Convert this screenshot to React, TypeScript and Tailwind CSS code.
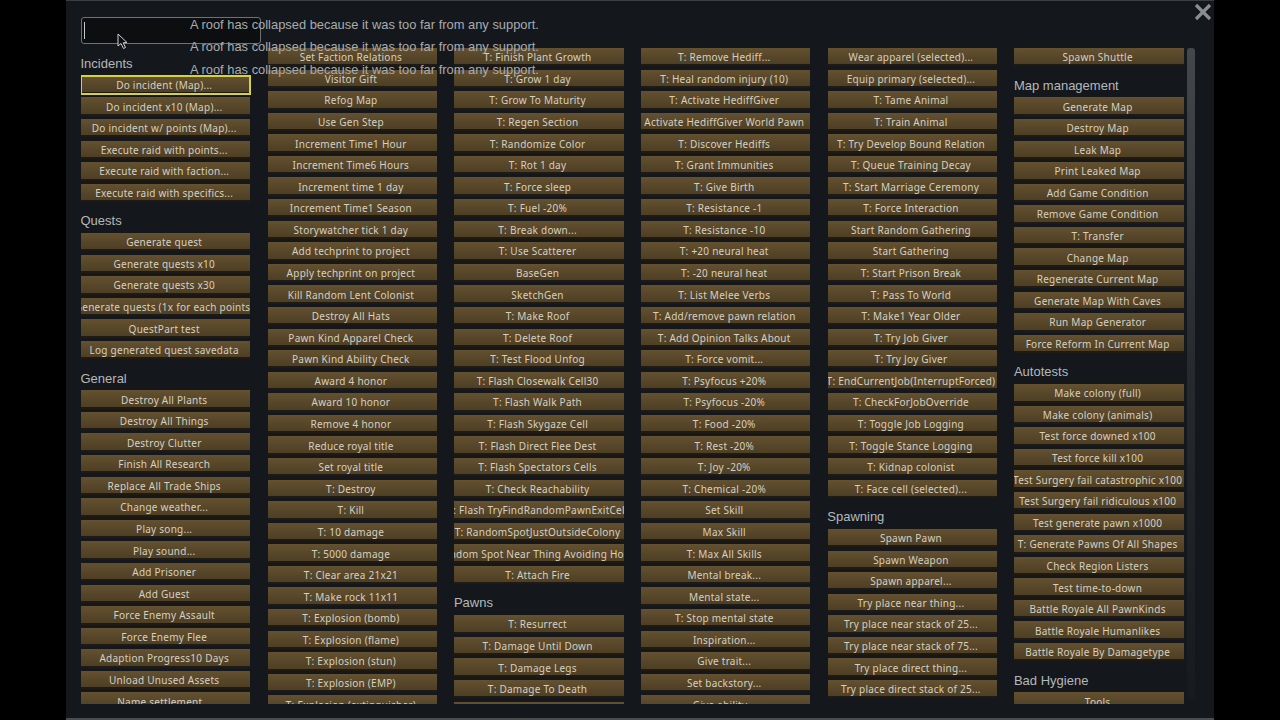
type Section = { title?: string; items: string[] };

const COLUMNS: Section[][] = [
  [
    {
      title: 'Incidents',
      items: [
        'Do incident (Map)...',
        'Do incident x10 (Map)...',
        'Do incident w/ points (Map)...',
        'Execute raid with points...',
        'Execute raid with faction...',
        'Execute raid with specifics...',
      ],
    },
    {
      title: 'Quests',
      items: [
        'Generate quest',
        'Generate quests x10',
        'Generate quests x30',
        'Generate quests (1x for each points)',
        'QuestPart test',
        'Log generated quest savedata',
      ],
    },
    {
      title: 'General',
      items: [
        'Destroy All Plants',
        'Destroy All Things',
        'Destroy Clutter',
        'Finish All Research',
        'Replace All Trade Ships',
        'Change weather...',
        'Play song...',
        'Play sound...',
        'Add Prisoner',
        'Add Guest',
        'Force Enemy Assault',
        'Force Enemy Flee',
        'Adaption Progress10 Days',
        'Unload Unused Assets',
        'Name settlement...',
      ],
    },
  ],
  [
    {
      items: [
        'Set Faction Relations',
        'Visitor Gift',
        'Refog Map',
        'Use Gen Step',
        'Increment Time1 Hour',
        'Increment Time6 Hours',
        'Increment time 1 day',
        'Increment Time1 Season',
        'Storywatcher tick 1 day',
        'Add techprint to project',
        'Apply techprint on project',
        'Kill Random Lent Colonist',
        'Destroy All Hats',
        'Pawn Kind Apparel Check',
        'Pawn Kind Ability Check',
        'Award 4 honor',
        'Award 10 honor',
        'Remove 4 honor',
        'Reduce royal title',
        'Set royal title',
        'T: Destroy',
        'T: Kill',
        'T: 10 damage',
        'T: 5000 damage',
        'T: Clear area 21x21',
        'T: Make rock 11x11',
        'T: Explosion (bomb)',
        'T: Explosion (flame)',
        'T: Explosion (stun)',
        'T: Explosion (EMP)',
        'T: Explosion (extinguisher)',
      ],
    },
  ],
  [
    {
      items: [
        'T: Finish Plant Growth',
        'T: Grow 1 day',
        'T: Grow To Maturity',
        'T: Regen Section',
        'T: Randomize Color',
        'T: Rot 1 day',
        'T: Force sleep',
        'T: Fuel -20%',
        'T: Break down...',
        'T: Use Scatterer',
        'BaseGen',
        'SketchGen',
        'T: Make Roof',
        'T: Delete Roof',
        'T: Test Flood Unfog',
        'T: Flash Closewalk Cell30',
        'T: Flash Walk Path',
        'T: Flash Skygaze Cell',
        'T: Flash Direct Flee Dest',
        'T: Flash Spectators Cells',
        'T: Check Reachability',
        'T: Flash TryFindRandomPawnExitCell',
        'T: RandomSpotJustOutsideColony',
        'T: Random Spot Near Thing Avoiding Hostiles',
        'T: Attach Fire',
      ],
    },
    {
      title: 'Pawns',
      items: ['T: Resurrect', 'T: Damage Until Down', 'T: Damage Legs', 'T: Damage To Death', 'T: Surgery'],
    },
  ],
  [
    {
      items: [
        'T: Remove Hediff...',
        'T: Heal random injury (10)',
        'T: Activate HediffGiver',
        'Activate HediffGiver World Pawn',
        'T: Discover Hediffs',
        'T: Grant Immunities',
        'T: Give Birth',
        'T: Resistance -1',
        'T: Resistance -10',
        'T: +20 neural heat',
        'T: -20 neural heat',
        'T: List Melee Verbs',
        'T: Add/remove pawn relation',
        'T: Add Opinion Talks About',
        'T: Force vomit...',
        'T: Psyfocus +20%',
        'T: Psyfocus -20%',
        'T: Food -20%',
        'T: Rest -20%',
        'T: Joy -20%',
        'T: Chemical -20%',
        'Set Skill',
        'Max Skill',
        'T: Max All Skills',
        'Mental break...',
        'Mental state...',
        'T: Stop mental state',
        'Inspiration...',
        'Give trait...',
        'Set backstory...',
        'Give ability...',
      ],
    },
  ],
  [
    {
      items: [
        'Wear apparel (selected)...',
        'Equip primary (selected)...',
        'T: Tame Animal',
        'T: Train Animal',
        'T: Try Develop Bound Relation',
        'T: Queue Training Decay',
        'T: Start Marriage Ceremony',
        'T: Force Interaction',
        'Start Random Gathering',
        'Start Gathering',
        'T: Start Prison Break',
        'T: Pass To World',
        'T: Make1 Year Older',
        'T: Try Job Giver',
        'T: Try Joy Giver',
        'T: EndCurrentJob(InterruptForced)',
        'T: CheckForJobOverride',
        'T: Toggle Job Logging',
        'T: Toggle Stance Logging',
        'T: Kidnap colonist',
        'T: Face cell (selected)...',
      ],
    },
    {
      title: 'Spawning',
      items: [
        'Spawn Pawn',
        'Spawn Weapon',
        'Spawn apparel...',
        'Try place near thing...',
        'Try place near stack of 25...',
        'Try place near stack of 75...',
        'Try place direct thing...',
        'Try place direct stack of 25...',
      ],
    },
  ],
  [
    { items: ['Spawn Shuttle'] },
    {
      title: 'Map management',
      items: [
        'Generate Map',
        'Destroy Map',
        'Leak Map',
        'Print Leaked Map',
        'Add Game Condition',
        'Remove Game Condition',
        'T: Transfer',
        'Change Map',
        'Regenerate Current Map',
        'Generate Map With Caves',
        'Run Map Generator',
        'Force Reform In Current Map',
      ],
    },
    {
      title: 'Autotests',
      items: [
        'Make colony (full)',
        'Make colony (animals)',
        'Test force downed x100',
        'Test force kill x100',
        'Test Surgery fail catastrophic x100',
        'Test Surgery fail ridiculous x100',
        'Test generate pawn x1000',
        'T: Generate Pawns Of All Shapes',
        'Check Region Listers',
        'Test time-to-down',
        'Battle Royale All PawnKinds',
        'Battle Royale Humanlikes',
        'Battle Royale By Damagetype',
      ],
    },
    { title: 'Bad Hygiene', items: ['Tools'] },
  ],
];

function DebugButton({ label, active }: { label: string; active?: boolean }) {
  return (
    <div
      className={`relative flex h-[18.4px] mb-[3.2px] items-center justify-center overflow-hidden whitespace-nowrap bg-gradient-to-b from-[#635131] via-[#584729] to-[#4e3f25] border-b-2 border-[#211a11] pt-[3px] pr-[3px] text-[10px] tracking-[0.25px] text-[#d6d0c2] ${
        active ? 'outline-2 outline-offset-[-1px] outline-[#d6d13f]' : ''
      }`}
    >
      {label}
    </div>
  );
}

export default function App() {
  return (
    <div className="flex h-[720px] w-[1280px] justify-center overflow-hidden bg-black font-['Noto_Sans',sans-serif]">
      <div className="relative h-[720px] w-[1148px] border-t border-b-2 border-t-[#3b3e42] border-b-[#4a4d50] bg-[#14181c] pl-[15px]">
        {/* search box */}
        <div className="mt-[16px] flex h-[27px] w-[180px] items-center rounded-[3px] border border-[#6f7274] bg-[#0c0e10] pl-[2px]">
          <div className="h-[17px] w-px bg-[#c8c8c8]" />
        </div>

        <div className="mt-[4px] flex h-[656px] overflow-hidden">
          <div className="flex gap-[17.3px]">
            {COLUMNS.map((sections, i) => (
              <div key={i} className="w-[169.4px]">
                {sections.map((section, j) => (
                  <div key={j}>
                    {section.title && (
                      <div className="h-[27.8px] pt-[7px] -ml-[0.5px] font-['Liberation_Sans',sans-serif] text-[13px] leading-[17px] text-[#b4b8bb] whitespace-nowrap">
                        {section.title}
                      </div>
                    )}
                    {section.items.map((item) => (
                      <DebugButton key={item} label={item} active={item === 'Do incident (Map)...'} />
                    ))}
                  </div>
                ))}
              </div>
            ))}
          </div>
          {/* scrollbar */}
          <div className="ml-[3.6px] h-[652px] w-[8px] rounded-[3px] bg-gradient-to-b from-[#44474b] via-[#26292d] to-[#171a1e]" />
        </div>

        {/* roof messages */}
        <div className="absolute left-[124px] top-[14.5px] flex flex-col gap-[5.4px] font-['Liberation_Sans',sans-serif] text-[12.9px] leading-[17.6px] text-[#a9abad]">
          <span>A roof has collapsed because it was too far from any support.</span>
          <span>A roof has collapsed because it was too far from any support.</span>
          <span>A roof has collapsed because it was too far from any support.</span>
        </div>

        {/* close */}
        <svg viewBox="0 0 18 18" className="absolute right-[2px] top-[2px] h-[18px] w-[18px]" fill="none" stroke="#8b8e90" strokeWidth="3.2">
          <path d="M2 2 L16 16 M16 2 L2 16" />
        </svg>

        {/* mouse cursor */}
        <svg viewBox="0 0 12 17" className="absolute left-[51px] top-[32px] h-[17px] w-[12px]" fill="#0d0f11" stroke="#cfcfcf" strokeWidth="1">
          <path d="M1 1 L1 13 L4 10.5 L6.5 15.5 L8.5 14.5 L6.2 9.8 L10 9.5 Z" />
        </svg>
      </div>
    </div>
  );
}
